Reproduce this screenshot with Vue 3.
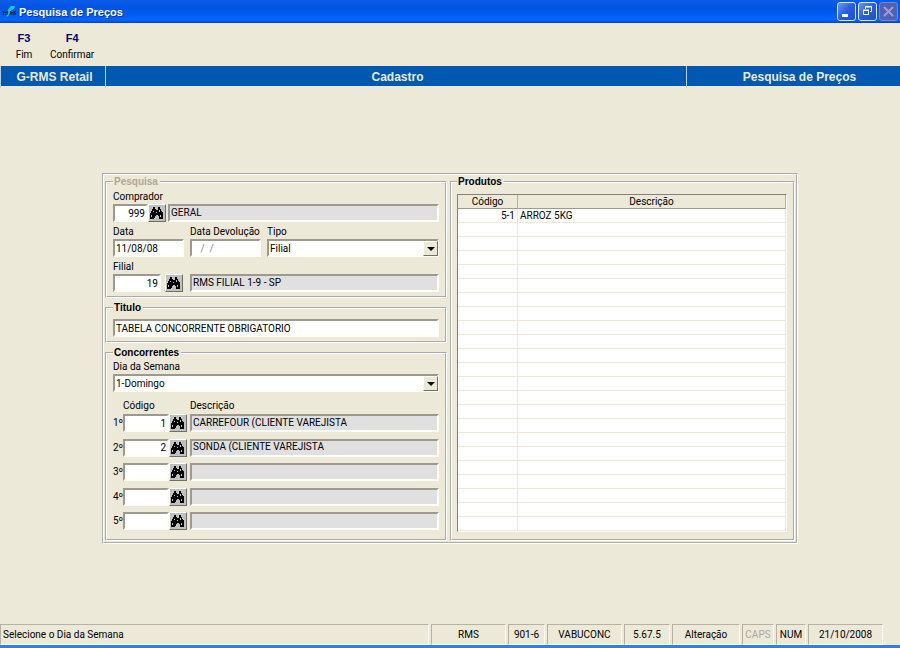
<template>
  <div class="window">
    <header class="title-bar">
      <svg class="app-icon" viewBox="0 0 16 16" aria-hidden="true">
        <path d="M5 13 7 5 10 1h5l-2 4h-2l-1 2h3l-2 2H9l-2 4z" fill="#18c8d8" />
        <path d="M1 7h2v1h2V7h2v4H6V9H5v2H4V9H2v2H1zM9 7h2v1h1V7h1v4h-1V9h-1v2H9zM14 7h2v1h-1v1h1v2h-2z" fill="#123" />
      </svg>
      <h1>Pesquisa de Preços</h1>
      <div class="window-buttons">
        <button type="button" aria-label="Minimizar">
          <svg viewBox="0 0 17 17"><path d="M4 11h6v3H4z" fill="#fff" /></svg>
        </button>
        <button type="button" aria-label="Restaurar">
          <svg viewBox="0 0 17 17" fill="none" stroke="#fff">
            <path d="M6.500 6V3.500h6v5H11M6 4h7M4.500 7.500h5v4h-5zM4 7h6" />
          </svg>
        </button>
        <button type="button" class="off" aria-label="Fechar" disabled>
          <svg viewBox="0 0 17 17"><path d="M4 4l9 9M13 4l-9 9" stroke="#9a9fd8" stroke-width="2" /></svg>
        </button>
      </div>
    </header>

    <nav class="toolbar">
      <button type="button"><b>F3</b><span>Fim</span></button>
      <button type="button"><b>F4</b><span>Confirmar</span></button>
    </nav>

    <div class="banner">
      <span>G-RMS Retail</span>
      <span>Cadastro</span>
      <span>Pesquisa de Preços</span>
    </div>

    <main>
      <form class="panel" @submit.prevent>
        <div class="left">
          <fieldset class="search">
            <legend class="dim">Pesquisa</legend>
            <label for="comprador">Comprador</label>
            <div class="line buyer">
              <input id="comprador" v-model="comprador" class="num" />
              <button type="button" class="find" aria-label="Procurar comprador">
                <svg viewBox="0 0 14 12"><path :d="binoculars" /><path :d="glints" class="glint" /></svg>
              </button>
              <input value="GERAL" readonly aria-label="Nome do comprador" />
            </div>
            <div class="line dates">
              <div class="field">
                <label for="data">Data</label>
                <input id="data" v-model="data" />
              </div>
              <div class="field">
                <label for="devolucao">Data Devolução</label>
                <input id="devolucao" v-model="devolucao" class="empty-date" />
              </div>
              <div class="field">
                <label for="tipo">Tipo</label>
                <div class="combo">
                  <select id="tipo" v-model="tipo">
                    <option>Filial</option>
                  </select>
                  <span class="arrow"></span>
                </div>
              </div>
            </div>
            <label for="filial">Filial</label>
            <div class="line branch">
              <input id="filial" v-model="filial" class="num" />
              <button type="button" class="find" aria-label="Procurar filial">
                <svg viewBox="0 0 14 12"><path :d="binoculars" /><path :d="glints" class="glint" /></svg>
              </button>
              <input value="RMS FILIAL 1-9 - SP" readonly aria-label="Nome da filial" />
            </div>
          </fieldset>

          <fieldset class="heading">
            <legend>Titulo</legend>
            <input v-model="titulo" aria-label="Titulo" />
          </fieldset>

          <fieldset class="rivals">
            <legend>Concorrentes</legend>
            <label for="dia">Dia da Semana</label>
            <div class="combo">
              <select id="dia" v-model="dia">
                <option>1-Domingo</option>
              </select>
              <span class="arrow"></span>
            </div>
            <div class="rival-head">
              <span>Código</span>
              <span>Descrição</span>
            </div>
            <div class="rival-list">
              <div v-for="(c, i) in concorrentes" :key="i" class="line rival">
                <label :for="'conc' + i">{{ i + 1 }}º</label>
                <input :id="'conc' + i" v-model="c.codigo" class="num" />
                <button type="button" class="find" aria-label="Procurar concorrente">
                  <svg viewBox="0 0 14 12"><path :d="binoculars" /><path :d="glints" class="glint" /></svg>
                </button>
                <input :value="c.descricao" readonly aria-label="Descrição" />
              </div>
            </div>
          </fieldset>
        </div>

        <fieldset class="products">
          <legend>Produtos</legend>
          <table>
            <thead>
              <tr>
                <th class="code">Código</th>
                <th>Descrição</th>
              </tr>
            </thead>
            <tbody>
              <tr v-for="(p, i) in produtos" :key="i">
                <td class="code">{{ p.codigo }}</td>
                <td>{{ p.descricao }}</td>
              </tr>
            </tbody>
          </table>
        </fieldset>
      </form>
    </main>

    <footer class="status">
      <span class="message">Selecione o Dia da Semana</span>
      <span>RMS</span>
      <span>901-6</span>
      <span>VABUCONC</span>
      <span>5.67.5</span>
      <span>Alteração</span>
      <span class="dim">CAPS</span>
      <span>NUM</span>
      <span>21/10/2008</span>
    </footer>
  </div>
</template>

<script setup>
import { ref } from 'vue'

const comprador = ref('999')
const data = ref('11/08/08')
const devolucao = ref(' /  /')
const tipo = ref('Filial')
const filial = ref('19')
const titulo = ref('TABELA CONCORRENTE OBRIGATORIO')
const dia = ref('1-Domingo')

const concorrentes = ref([
  { codigo: '1', descricao: 'CARREFOUR (CLIENTE VAREJISTA' },
  { codigo: '2', descricao: 'SONDA (CLIENTE VAREJISTA' },
  { codigo: '', descricao: '' },
  { codigo: '', descricao: '' },
  { codigo: '', descricao: '' }
])

// the grid always shows 23 lines
const produtos = Array.from({ length: 23 }, () => ({ codigo: '', descricao: '' }))
produtos[0] = { codigo: '5-1', descricao: 'ARROZ 5KG' }

const binoculars =
  'M3 0h2v2h1v1h2V0h2v2h1v2h1v1h1v7h-4V9H8V8H6v1H5v2H4v1H0V6h1V4h1V2h1z'
const glints = 'M3 4h1v1H3zM9 3h1v2H9zM1 8h1v2H1zM6 5h1v1H6zM10 8h1v2h-1z'
</script>

<style>
body {
  background: #ece9d8;
}
</style>

<style scoped>
.window {
  display: flex;
  flex-direction: column;
  min-height: 100vh;
  box-sizing: border-box;
  border-bottom: 3px solid #2f80e4;
  background: #ece9d8;
  color: #000;
  font: 10px/14px "Roboto", "Liberation Sans", sans-serif;
}
.window * {
  box-sizing: border-box;
}
button, input, select {
  font: inherit;
  color: inherit;
  margin: 0;
  border-radius: 0;
}
.title-bar {
  display: flex;
  align-items: center;
  height: 23px;
  padding: 0 2px;
  background: linear-gradient(#0a5be8, #0053e1 35%, #0060fc 75%, #0066ff 88%, #0040c0);
  color: #fff;
}
.app-icon {
  width: 14px;
  height: 16px;
  margin-right: 3px;
}
h1 {
  flex: 1;
  margin: 0;
  font: bold 11px/16px "Liberation Sans", sans-serif;
  text-shadow: 1px 1px #0a2f9c;
}
.window-buttons {
  display: flex;
  gap: 2px;
}
.window-buttons button {
  width: 19px;
  height: 19px;
  padding: 0;
  border: 1px solid #dbe6ff;
  border-radius: 3px;
  background: linear-gradient(135deg, #6c95f0, #2a5ce0 50%, #1c4fd8);
}
.window-buttons svg {
  display: block;
  width: 17px;
  height: 17px;
}
.window-buttons .off {
  border-color: #7885cf;
  background: #5260b4;
}
.toolbar {
  display: flex;
  gap: 5px;
  height: 43px;
  padding: 8px 4px 0;
}
.toolbar button {
  display: flex;
  flex-direction: column;
  align-items: center;
  gap: 3px;
  min-width: 40px;
  padding: 0 1px;
  border: 0;
  background: none;
}
.toolbar b {
  color: #000070;
  font: bold 11px/14px "Liberation Sans", sans-serif;
}
.banner {
  display: grid;
  grid-template-columns: 106px 1fr 213px;
  height: 20px;
  background: #0058b0;
  color: #ece9d8;
  font: bold 12px/22px "Liberation Sans", sans-serif;
  text-align: center;
}
.banner span {
  padding-left: 3px;
  border-right: 1px solid #b8cfe4;
}
.banner span:first-child {
  border-left: 1px solid #b8cfe4;
}
.banner span:last-child {
  padding-left: 12px;
  border-right: 0;
}
main {
  flex: 1;
  padding: 87px 102px 40px;
}
.panel {
  display: grid;
  grid-template-columns: 342px 1fr;
  gap: 3px;
  padding: 0 1px 1px;
  border: 2px groove #fff;
}
.left {
  display: flex;
  flex-direction: column;
  gap: 3px;
}
fieldset {
  min-width: 0;
  margin: 0;
  padding: 0 6px 4px;
  border: 2px groove #fff;
}
legend {
  padding: 0 2px 0 1px;
  font: bold 10px/14px "Liberation Sans", sans-serif;
}
.dim {
  color: #aca899;
}
label {
  display: block;
  white-space: nowrap;
}
input {
  display: block;
  width: 100%;
  min-width: 0;
  height: 18px;
  padding: 0 1px;
  border: 2px solid;
  border-color: #9d9a8c #fffef6 #fffef6 #9d9a8c;
  background: #fff;
  outline: none;
}
input[readonly] {
  padding-bottom: 2px;
  background: #e0e0e0;
}
.num {
  text-align: right;
}
.empty-date {
  padding-left: 6px;
  color: #888;
}
.line {
  display: grid;
}
.search > label {
  padding-top: 1px;
}
.search > .line + label {
  margin-top: 2px;
}
.buyer {
  grid-template-columns: 35px 20px 1fr;
}
.branch {
  grid-template-columns: 48px 21px 1fr;
  column-gap: 4px;
}
.dates {
  grid-template-columns: 71px 71px 1fr;
  column-gap: 6px;
  margin-top: 2px;
}
.field {
  padding-top: 1px;
}
.find {
  width: 18px;
  height: 18px;
  padding: 1px;
  border: 1px solid;
  border-color: #fff #716f64 #716f64 #fff;
  background: #c0c0c0;
}
.find svg {
  display: block;
  width: 14px;
  height: 12px;
  shape-rendering: crispEdges;
}
.glint {
  fill: #c0c0c0;
}
.combo {
  position: relative;
}
select {
  display: block;
  width: 100%;
  height: 18px;
  padding: 1px 1px 0;
  appearance: none;
  border: 2px solid;
  border-color: #9d9a8c #fffef6 #fffef6 #9d9a8c;
  background: #fff;
  outline: none;
}
.arrow {
  position: absolute;
  top: 2px;
  right: 1px;
  display: grid;
  place-items: center;
  width: 15px;
  height: 15px;
  border: 1px solid;
  border-color: #fff #716f64 #716f64 #fff;
  background: #ece9d8;
  pointer-events: none;
}
.arrow::after {
  content: "";
  border: 4px solid transparent;
  border-top-color: #000;
  border-bottom: 0;
}
.heading {
  padding-top: 4px;
}
.rivals {
  display: flex;
  flex: 1;
  flex-direction: column;
}
.rival-head {
  display: grid;
  grid-template-columns: 67px 1fr;
  padding: 7px 0 1px 10px;
}
.rival-list {
  display: flex;
  flex: 1;
  flex-direction: column;
  justify-content: space-between;
  padding-bottom: 5px;
}
.rival {
  grid-template-columns: 10px 46px 21px 1fr;
  align-items: center;
}
.products {
  padding: 5px 6px 7px 5px;
}
table {
  width: 100%;
  border: 1px solid;
  border-color: #848276 #fffef6 #fffef6 #848276;
  border-spacing: 0;
  table-layout: fixed;
  background: #fff;
}
th {
  height: 14px;
  padding: 0;
  border-right: 1px solid #b5b2a2;
  border-bottom: 1px solid #9d9a8c;
  background: #ece9d8;
  font-weight: normal;
  line-height: 13px;
}
td {
  height: 14px;
  padding: 0 2px;
  border-right: 1px solid #ece9d8;
  border-bottom: 1px solid #ece9d8;
  line-height: 13px;
}
.code {
  width: 60px;
}
td.code {
  text-align: right;
}
tbody {
  border-bottom: 1px solid #ece9d8;
}
.status {
  display: grid;
  grid-template-columns: 1fr 75px 37px 75px 46px 68px 32px 30px 75px;
  gap: 2px;
  height: 21px;
  padding-right: 17px;
  line-height: 19px;
  text-align: center;
}
.status span {
  border: 1px solid;
  border-color: #b5b2a2 #fffef6 #fffef6 #b5b2a2;
}
.status .message {
  padding-left: 2px;
  text-align: left;
}
</style>
